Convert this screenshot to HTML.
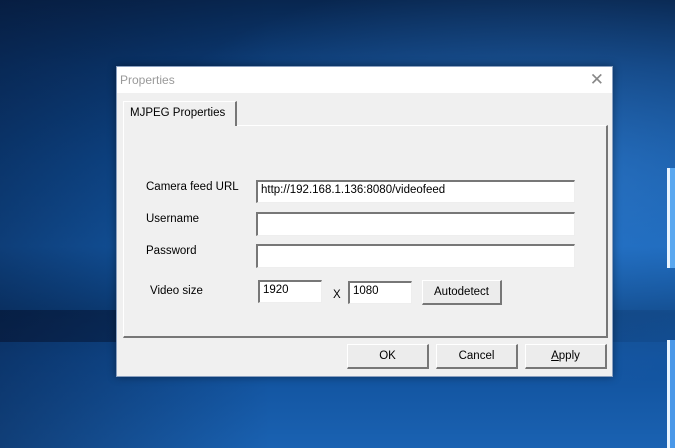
<!DOCTYPE html>
<html><head><style>
*{margin:0;padding:0;box-sizing:border-box}
html,body{width:675px;height:448px;overflow:hidden}
body{position:relative;font-family:"Liberation Sans",sans-serif;font-size:11.5px;color:#000;
background:linear-gradient(180deg,#08264f 0%,#0b3a74 15%,#0f4f98 35%,#1560b2 55%,#0d4585 70%,#11519c 80%,#1a62b2 100%);}
.bg1{position:absolute;left:0;top:0;width:675px;height:448px;background:radial-gradient(ellipse at 80% 40%,rgba(70,150,235,.45),transparent 55%),linear-gradient(90deg,rgba(5,20,50,.45),transparent 40%)}
.band{position:absolute;left:0;top:310px;width:675px;height:32px;background:linear-gradient(90deg,rgba(5,20,50,.6),rgba(5,25,60,.3) 60%,rgba(5,30,70,.1))}
.logo{position:absolute;left:667px;top:168px;width:8px;height:100px;border-left:3px solid #e8f4ff;background:#5aa8f0}
.logo3{position:absolute;left:667px;top:340px;width:8px;height:120px;border-left:3px solid #e8f4ff;background:#4a98e8}
.win{position:absolute;left:116px;top:66px;width:497px;height:311px;background:#f0f0f0;border:1px solid #8aa0c0;box-shadow:0 0 8px rgba(0,0,0,.4)}
.title{position:absolute;left:0;top:0;width:100%;height:26px;background:#fff}
.title span{position:absolute;left:3px;top:6px;color:#999;font-size:12px}
.x{position:absolute;right:8px;top:3px;color:#888;font-size:17px;font-weight:100}
.panel{position:absolute;left:6px;top:58px;width:485px;height:213px;border:1px solid #fff;border-right:2px solid #777;border-bottom:2px solid #777;background:#f0f0f0}
.tab{position:absolute;left:6px;top:34px;width:114px;height:25px;border:1px solid #fff;border-bottom:none;border-right:2px solid #777;background:#f0f0f0;padding:5px 0 0 6px}
.lbl{position:absolute}
.in{position:absolute;background:#fff;border-top:2px solid #777;border-left:2px solid #777;border-right:1px solid #eee;border-bottom:1px solid #eee;padding:2px 0 0 3px}
.btn{position:absolute;background:#ececec;border:1px solid #fff;border-right:2px solid #777;border-bottom:2px solid #777;text-align:center;padding-top:5px}
</style></head><body>
<div class="bg1"></div><div class="band"></div><div class="logo"></div><div class="logo3"></div>
<div class="win">
<div class="title"><span>Properties</span><div class="x">✕</div></div>
<div class="panel"></div>
<div class="tab">MJPEG Properties</div>
<div class="lbl" style="left:29px;top:114px">Camera feed URL</div>
<div class="lbl" style="left:29px;top:146px">Username</div>
<div class="lbl" style="left:29px;top:178px">Password</div>
<div class="lbl" style="left:33px;top:218px">Video size</div>
<div class="in" style="left:139px;top:113px;width:319px;height:23px">http://192.168.1.136:8080/videofeed</div>
<div class="in" style="left:139px;top:145px;width:319px;height:24px"></div>
<div class="in" style="left:139px;top:177px;width:319px;height:24px"></div>
<div class="in" style="left:141px;top:213px;width:64px;height:23px">1920</div>
<div class="lbl" style="left:216px;top:222px">X</div>
<div class="in" style="left:231px;top:214px;width:64px;height:23px">1080</div>
<div class="btn" style="left:305px;top:213px;width:80px;height:25px">Autodetect</div>
<div class="btn" style="left:230px;top:277px;width:82px;height:25px">OK</div>
<div class="btn" style="left:319px;top:277px;width:82px;height:25px">Cancel</div>
<div class="btn" style="left:408px;top:277px;width:82px;height:25px"><u>A</u>pply</div>
</div>
</body></html>
